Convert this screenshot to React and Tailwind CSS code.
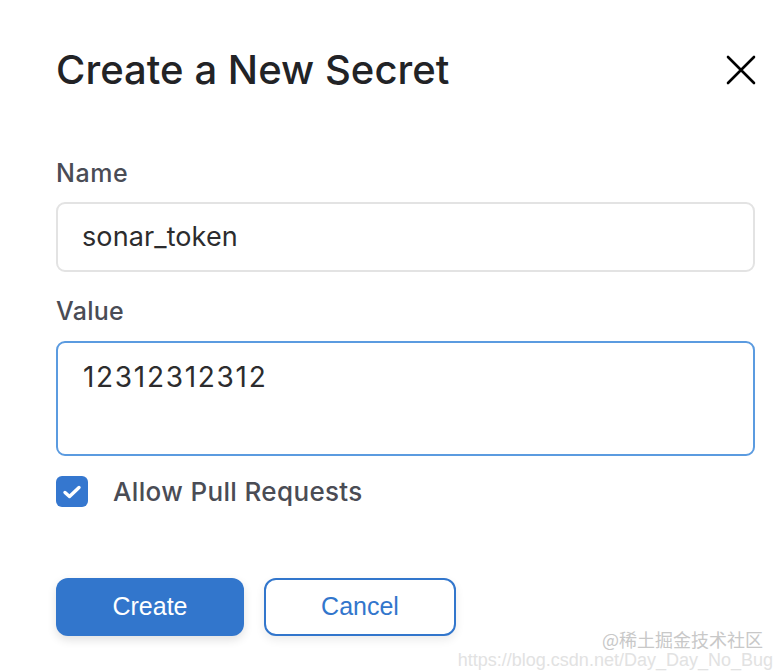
export default function App() {
  return (
    <div className="relative w-[782px] h-[672px] bg-white overflow-hidden" style={{ fontFamily: "Inter, 'Noto Sans', sans-serif" }}>
      <div className="pl-[56px] pr-[27px] pt-[44px]">
        {/* Header */}
        <div className="flex items-center justify-between">
          <h1 className="text-[40px] leading-[52px] font-medium text-[#222326] tracking-[0.05px]">Create a New Secret</h1>
          <button className="text-black -mr-[1px]">
            <svg width="30" height="30" viewBox="0 0 30 30" fill="none" stroke="currentColor" strokeWidth="2.6" strokeLinecap="round">
              <path d="M2 2L28 28M28 2L2 28" />
            </svg>
          </button>
        </div>

        {/* Name */}
        <label className="block mt-[61px] text-[25px] leading-[32px] font-medium text-[#4a4c55] tracking-[0.6px]">Name</label>
        <div className="mt-[13px] h-[70px] border-2 border-[#e3e3e3] rounded-[9px] px-[24px] flex items-center">
          <span className="text-[27px] text-[#2c2c2e] tracking-[0.1px]">sonar_token</span>
        </div>

        {/* Value */}
        <label className="block mt-[23px] text-[25px] leading-[32px] font-medium text-[#4a4c55] tracking-[0.3px]">Value</label>
        <div className="mt-[14px] h-[115px] border-2 border-[#5b9be0] rounded-[9px] px-[25px] pt-[13px]">
          <span className="text-[28px] text-[#2c2c2e] tracking-[1.7px]">12312312312</span>
        </div>

        {/* Checkbox */}
        <div className="mt-[16px] flex items-center gap-[25px]">
          <div className="w-[32px] h-[31px] rounded-[6px] bg-[#3577cf] flex items-center justify-center">
            <svg width="20" height="16" viewBox="0 0 20 16" fill="none" stroke="white" strokeWidth="3.4" strokeLinecap="round" strokeLinejoin="round">
              <path d="M3 8.5L7.5 12.5L17 3.5" />
            </svg>
          </div>
          <span className="text-[26px] font-medium text-[#4a4c55] tracking-[0.35px]">Allow Pull Requests</span>
        </div>

        {/* Buttons */}
        <div className="mt-[67px] flex gap-[20px]">
          <button className="w-[188px] h-[58px] rounded-[12px] bg-[#3276cc] text-white text-[25px] shadow-[0_4px_10px_rgba(0,0,0,0.12)]" style={{ fontFamily: "'Liberation Sans', Arial, sans-serif" }}>
            Create
          </button>
          <button className="w-[192px] h-[58px] rounded-[12px] border-2 border-[#3276cc] bg-white text-[#3276cc] text-[25px] shadow-[0_4px_10px_rgba(0,0,0,0.08)]" style={{ fontFamily: "'Liberation Sans', Arial, sans-serif" }}>
            Cancel
          </button>
        </div>
      </div>

      {/* watermark */}
      <div className="absolute right-[19px] top-[629px] text-[18px] leading-[20px] text-[#c8c8c8]" style={{ fontFamily: "'Noto Sans CJK SC', sans-serif" }}>@稀土掘金技术社区</div>
      <div className="absolute right-[9px] top-[650px] text-[18px] leading-[20px] text-[#e2e2e2]" style={{ fontFamily: "'Liberation Sans', sans-serif" }}>https://blog.csdn.net/Day_Day_No_Bug</div>
    </div>
  );
}
